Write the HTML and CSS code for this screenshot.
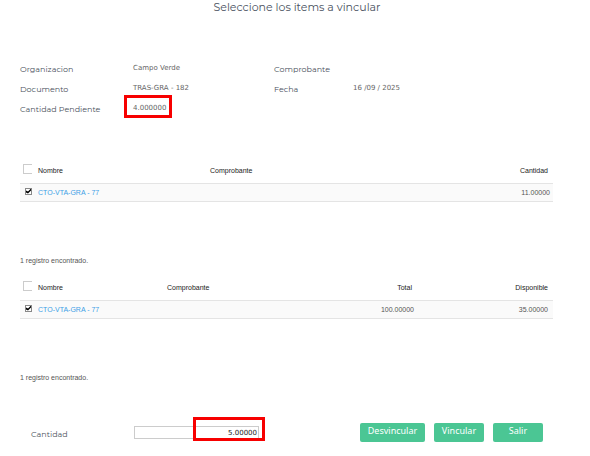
FILE: index.html
```html
<!DOCTYPE html>
<html lang="es">
<head>
    <meta charset="UTF-8">
    <title>Vincular items</title>
    <link rel="stylesheet" href="styles.css">
</head>
<body>
    <h1>Seleccione los items a vincular</h1>

    <!-- Datos del documento -->
    <dl class="info">
        <dt>Organizacion</dt>
        <dd>Campo Verde</dd>
        <dt>Comprobante</dt>
        <dd></dd>
        <dt>Documento</dt>
        <dd>TRAS-GRA - 182</dd>
        <dt>Fecha</dt>
        <dd>16 /09 / 2025</dd>
        <dt>Cantidad Pendiente</dt>
        <dd><span class="marked pending">4.000000</span></dd>
    </dl>

    <!-- Items vinculados -->
    <section class="list">
        <table class="linked">
            <colgroup><col class="col-check"><col class="col-name"><col><col class="col-end"></colgroup>
            <thead>
                <tr>
                    <th><input type="checkbox" class="check-all" aria-label="Seleccionar todos"></th>
                    <th>Nombre</th>
                    <th>Comprobante</th>
                    <th class="num">Cantidad</th>
                </tr>
            </thead>
            <tbody>
                <tr>
                    <td><input type="checkbox" class="check" aria-label="CTO-VTA-GRA - 77" checked></td>
                    <td><a href="#">CTO-VTA-GRA - 77</a></td>
                    <td></td>
                    <td class="num">11.00000</td>
                </tr>
            </tbody>
        </table>
        <p>1 registro encontrado.</p>
    </section>

    <!-- Items disponibles -->
    <section class="list">
        <table class="available">
            <colgroup><col class="col-check"><col class="col-name"><col><col class="col-total"><col class="col-end"></colgroup>
            <thead>
                <tr>
                    <th><input type="checkbox" class="check-all" aria-label="Seleccionar todos"></th>
                    <th>Nombre</th>
                    <th>Comprobante</th>
                    <th class="num">Total</th>
                    <th class="num">Disponible</th>
                </tr>
            </thead>
            <tbody>
                <tr>
                    <td><input type="checkbox" class="check" aria-label="CTO-VTA-GRA - 77" checked></td>
                    <td><a href="#">CTO-VTA-GRA - 77</a></td>
                    <td></td>
                    <td class="num">100.00000</td>
                    <td class="num">35.00000</td>
                </tr>
            </tbody>
        </table>
        <p>1 registro encontrado.</p>
    </section>

    <form class="actions">
        <label for="cantidad">Cantidad</label>
        <div class="marked quantity">
            <input type="text" id="cantidad" value="5.00000">
        </div>
        <div class="buttons">
            <button type="button" class="wide">Desvincular</button>
            <button type="button">Vincular</button>
            <button type="button">Salir</button>
        </div>
    </form>
</body>
</html>
```

FILE: styles.css
```css
*,
*::after {
    box-sizing: border-box;
}

body {
    margin: 0;
    padding: 0 37px 0 20px;
    background-color: #fff;
    color: #555;
    font-family: "Liberation Sans", Arial, sans-serif;
    font-size: 7px;
}

h1 {
    margin: 0 0 45px;
    padding-left: 21px;
    color: #4a5261;
    font-family: Montserrat, "DejaVu Sans", sans-serif;
    font-size: 11px;
    font-weight: normal;
    line-height: 14px;
    text-align: center;
}

/* Datos del documento */
.info {
    display: grid;
    grid-template-columns: 113fr 141fr 79fr 200fr;
    grid-auto-rows: 20px;
    margin: 0 0 43px;
    font-family: "DejaVu Sans", sans-serif;
}

.info dt,
.actions label {
    color: #4a505c;
    font-family: Montserrat, "DejaVu Sans", sans-serif;
    font-size: 8px;
}

.info dt {
    line-height: 20px;
}

.info dd {
    margin: 0;
    color: #666;
    line-height: 18px;
}

/* Recuadro rojo */
.marked {
    position: relative;
}

.marked::after {
    content: "";
    position: absolute;
    border: 3px solid #f70000;
    pointer-events: none;
}

.pending::after {
    inset: -9px -6px -6px -9px;
}

.quantity::after {
    width: 72px;
    inset: -9px -6px -2px auto;
}

/* Tablas */
.list {
    height: 117px;
}

table {
    width: 100%;
    border-collapse: collapse;
    table-layout: fixed;
}

.col-check {
    width: 18px;
}

.linked .col-name {
    width: 172px;
}

.available .col-name {
    width: 129px;
}

.col-total {
    width: 120px;
}

.col-end {
    width: 136px;
}

th,
td {
    padding: 0;
    text-align: left;
}

th {
    height: 21px;
    color: #222;
    font-weight: normal;
    vertical-align: top;
    line-height: 17px;
}

td {
    height: 18px;
    border-top: 1px solid #e4e4e4;
    border-bottom: 1px solid #e4e4e4;
    background-color: #fafafa;
}

th.num {
    padding-right: 5px;
    text-align: right;
}

td.num {
    padding-right: 3px;
    text-align: right;
}

.available td:last-child {
    padding-right: 5px;
}

td a {
    color: #3d9fe6;
    text-decoration: none;
}

.list p {
    margin: 0;
    padding-top: 54px;
    line-height: 10px;
}

.check-all,
.check {
    display: block;
    appearance: none;
    margin: 0;
    background-color: #fff;
}

.check-all {
    width: 9px;
    height: 10px;
    margin: 2px 0 0 3px;
    border: 1px solid #ccc;
    border-right: 0;
}

.check {
    position: relative;
    width: 7px;
    height: 7px;
    margin: 0 0 2px 5px;
    border: 1px solid #888;
}

.check:checked::after {
    content: "";
    position: absolute;
    inset: 0;
    background-color: #000;
    clip-path: polygon(0 40%, 40% 60%, 100% 0, 100% 40%, 40% 100%, 0 80%);
}

/* Cantidad y botones */
.actions {
    display: flex;
    align-items: flex-start;
    padding: 27px 10px 0 11px;
}

.actions label {
    flex: 0 0 103px;
    padding-top: 6px;
    line-height: 10px;
}

.quantity {
    flex: 0 0 125px;
    margin-top: 3px;
}

.quantity input {
    display: block;
    width: 100%;
    height: 13px;
    padding: 0 1px;
    border: 1px solid #ccc;
    color: #222;
    font-family: "DejaVu Sans", sans-serif;
    font-size: 7px;
    text-align: right;
}

.buttons {
    display: flex;
    gap: 9px;
    margin-left: auto;
}

button {
    width: 50px;
    height: 19px;
    padding: 0 0 3px;
    border: 0;
    border-radius: 2px;
    background-color: #4bc694;
    color: #fff;
    font-family: "Noto Sans", sans-serif;
    font-size: 9px;
    line-height: 16px;
}

.wide {
    width: 65px;
}
```
